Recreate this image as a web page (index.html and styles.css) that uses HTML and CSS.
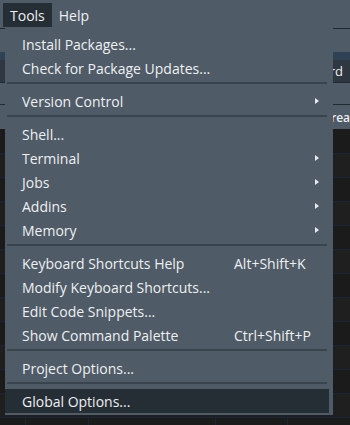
FILE: index.html
```html
<!DOCTYPE html>
<html>
<head>
<meta charset="utf-8">
<link rel="stylesheet" href="styles.css">
</head>
<body>
<div class="app">
  <div class="menubar">
    <span class="mb-item active">Tools</span>
    <span class="mb-item">Help</span>
  </div>
  <div class="toolbar"></div>
  <div class="tabstrip"></div>
  <div class="tabs"><span class="tab-label">Keyboard</span></div>
  <div class="band"></div>
  <div class="subbar"><span class="sub-label">area</span></div>
  <div class="grid"></div>
</div>

<div class="menu">
  <div class="item"><span class="label">Install Packages...</span></div>
  <div class="item"><span class="label">Check for Package Updates...</span></div>
  <div class="sep"></div>
  <div class="item"><span class="label">Version Control</span><span class="key"></span><span class="arrow"></span></div>
  <div class="sep"></div>
  <div class="item"><span class="label">Shell...</span></div>
  <div class="item"><span class="label">Terminal</span><span class="key"></span><span class="arrow"></span></div>
  <div class="item"><span class="label">Jobs</span><span class="key"></span><span class="arrow"></span></div>
  <div class="item"><span class="label">Addins</span><span class="key"></span><span class="arrow"></span></div>
  <div class="item"><span class="label">Memory</span><span class="key"></span><span class="arrow"></span></div>
  <div class="sep"></div>
  <div class="item"><span class="label">Keyboard Shortcuts Help</span><span class="key">Alt+Shift+K</span></div>
  <div class="item"><span class="label">Modify Keyboard Shortcuts...</span></div>
  <div class="item"><span class="label">Edit Code Snippets...</span></div>
  <div class="item"><span class="label">Show Command Palette</span><span class="key">Ctrl+Shift+P</span></div>
  <div class="sep"></div>
  <div class="item"><span class="label">Project Options...</span></div>
  <div class="sep"></div>
  <div class="item active"><span class="label">Global Options...</span></div>
</div>
</body>
</html>
```

FILE: styles.css
```css
html, body {
  margin: 0;
  padding: 0;
}
body {
  width: 350px;
  height: 425px;
  overflow: hidden;
  background: #1c1c1c;
  font-family: "Open Sans", "Noto Sans", "Liberation Sans", sans-serif;
  font-size: 14px;
  color: #eef0f2;
  position: relative;
}
.app {
  display: flex;
  flex-direction: column;
  height: 425px;
}
.menubar {
  height: 28px;
  background: #4f5b66;
  display: flex;
  align-items: flex-end;
  padding-left: 3px;
  border-bottom: 1px solid #1f2a33;
}
.mb-item {
  height: 24px;
  line-height: 25px;
  padding: 0 7px;
  margin-bottom: 1px;
}
.mb-item.active {
  background: #262e35;
}
.toolbar {
  height: 23px;
  background: #4f5b66;
}
.tabstrip {
  height: 8px;
  background: #2e4155;
}
.tabs {
  height: 22px;
  background: #2f3740;
  border-bottom: 1px solid #1f2a33;
  display: flex;
  justify-content: flex-end;
  align-items: center;
  padding-right: 7px;
  font-size: 13px;
}
.band {
  height: 21px;
  background: #4f5b66;
  border-bottom: 1px solid #1f2a33;
}
.subbar {
  height: 24px;
  background: #4f5b66;
  display: flex;
  align-items: center;
  justify-content: flex-end;
  font-size: 12px;
  white-space: nowrap;
  font-weight: 600;
}
.grid {
  flex: 1;
  background:
    repeating-linear-gradient(to bottom, transparent 0, transparent 23px, #172536 23px, #172536 24px),
    repeating-linear-gradient(to right, transparent 0, transparent 25px, #172536 25px, #172536 26px, transparent 26px, transparent 88px, #172536 88px, #172536 89px, transparent 89px, transparent 215px, #172536 215px, #172536 216px, transparent 216px, transparent 287px, #172536 287px, #172536 288px, transparent 288px, transparent 350px),
    repeating-linear-gradient(to bottom, #1b1b1b 0, #1b1b1b 24px, #1f1f1f 24px, #1f1f1f 48px);
  margin-top: 1px;
}

.menu {
  position: absolute;
  left: 5px;
  top: 27px;
  width: 328px;
  height: 388px;
  box-sizing: border-box;
  padding: 5px 0 2px;
  background: #4f5b66;
  display: flex;
  flex-direction: column;
}
.item {
  height: 24px;
  flex: none;
  display: grid;
  grid-template-columns: 212px 1fr 4px;
  align-items: center;
  padding: 0 14px 0 17px;
  white-space: nowrap;
}
.item.active {
  background: #262e35;
  margin-right: 4px;
}
.key {
  display: block;
}
.arrow {
  width: 0;
  height: 0;
  border-top: 3.5px solid transparent;
  border-bottom: 3.5px solid transparent;
  border-left: 4px solid #e8ecef;
}
.sep {
  height: 9px;
  flex: none;
  box-sizing: border-box;
  padding: 2px 6px 0 2px;
}
.sep::before {
  content: "";
  display: block;
  height: 2px;
  background: #3a444d;
}
```
